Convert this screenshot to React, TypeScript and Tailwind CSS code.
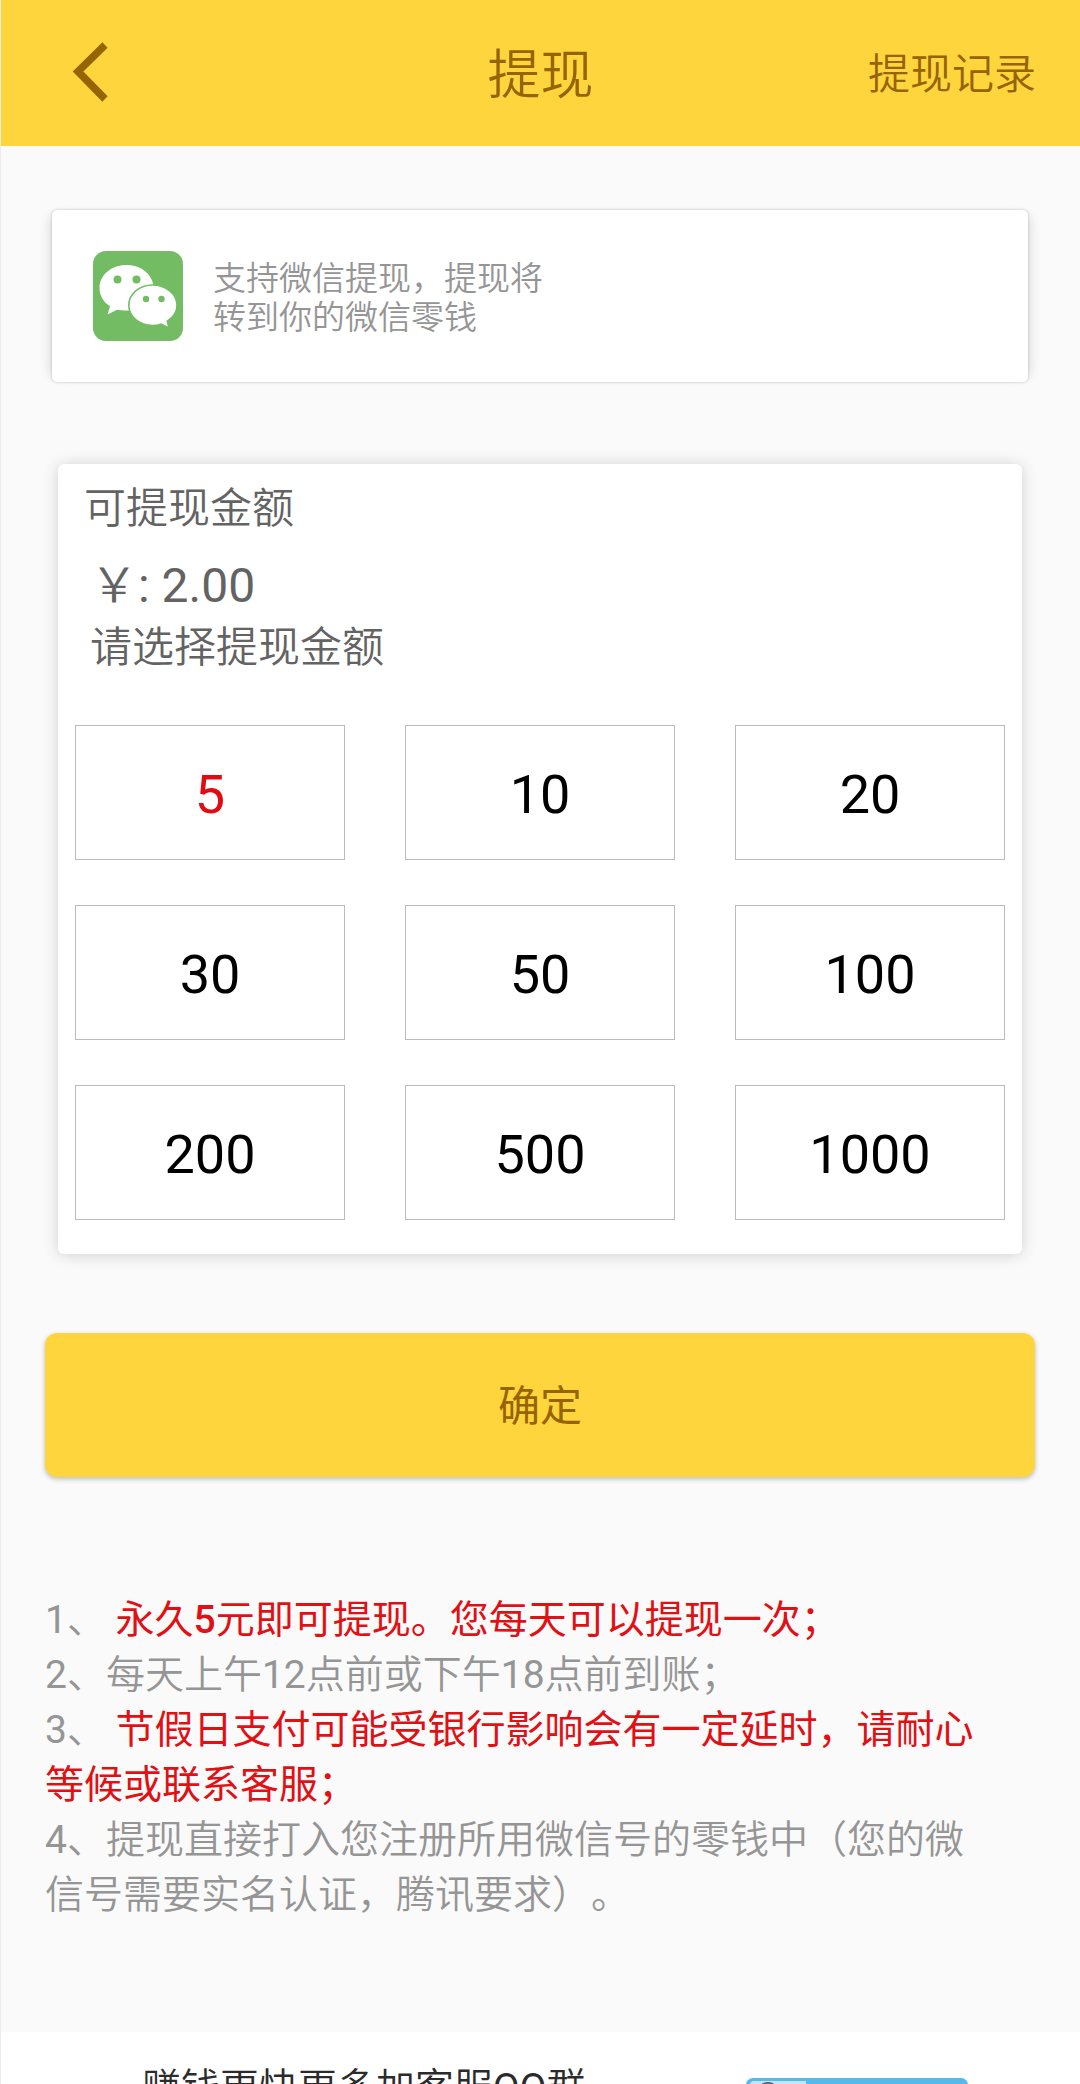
const amounts = [5, 10, 20, 30, 50, 100, 200, 500, 1000];

function WeChatLogo() {
  return (
    <svg viewBox="0 0 90 90" className="h-[90px] w-[90px] shrink-0">
      <rect width="90" height="90" rx="13" fill="#74bc63" />
      <path
        d="M33.500 14C18.300 14 6.500 24 6.500 37C6.500 44.500 10.300 51 17 55.200L14.500 63.500L24 58.800C27 59.300 30 59.600 33.500 59.600C48.700 59.600 60.500 50 60.500 37C60.500 24 48.700 14 33.500 14Z"
        fill="#fff"
      />
      <circle cx="24.500" cy="28.500" r="4" fill="#74bc63" />
      <circle cx="43.500" cy="28.500" r="4" fill="#74bc63" />
      <path
        d="M59.500 34C46.300 34 35.800 43 35.800 54.300C35.800 65.500 46.300 74.500 59.500 74.500C62.500 74.500 65.500 74 68 73.200L76 77L74.300 70.200C80 66.500 84 61 84 54.300C84 43 72.700 34 59.500 34Z"
        fill="#fff"
        stroke="#74bc63"
        strokeWidth="1.600"
      />
      <circle cx="53" cy="48" r="3.200" fill="#74bc63" />
      <circle cx="68.500" cy="48" r="3.200" fill="#74bc63" />
    </svg>
  );
}

export default function App() {
  return (
    <div className="flex h-[2084px] w-[1080px] flex-col overflow-hidden border-l border-[#ececec] bg-[#fafafa] font-['Roboto','Noto_Sans_CJK_SC_DemiLight','Noto_Sans_CJK_SC',sans-serif] font-normal [text-spacing-trim:space-all]">
      <header className="grid h-[146px] shrink-0 grid-cols-3 items-center bg-[#ffd53e] text-[#966403]">
        <svg viewBox="0 0 36 60" className="mb-[3px] ml-[71px] h-[60px] w-9" fill="none" stroke="#966403" strokeWidth="7.500">
          <path d="M33 3L6 29.500L33 57" />
        </svg>
        <h1 className="pt-[5px] text-center text-[53px] leading-[60px]">提现</h1>
        <span className="pt-1 pr-11 text-right text-[42px] leading-[60px]">提现记录</span>
      </header>

      <section className="mt-16 ml-[51px] flex h-[172px] w-[976px] shrink-0 items-center rounded-[5px] bg-white pl-[41px] shadow-[0_0_3px_rgba(0,0,0,0.22),8px_0_10px_-6px_rgba(0,0,0,0.12),-8px_0_10px_-6px_rgba(0,0,0,0.12)]">
        <WeChatLogo />
        <p className="ml-[30px] pt-[3px] text-[33px] leading-[39px] text-[#959595]">
          支持微信提现，提现将
          <br />
          转到你的微信零钱
        </p>
      </section>

      <section className="mt-[82px] ml-[57px] flex h-[790px] w-[964px] shrink-0 flex-col rounded-[6px] bg-white text-[#636363] shadow-[0_1px_16px_rgba(0,0,0,0.17)]">
        <h2 className="mt-[15px] ml-[26px] text-[42px] leading-[60px]">可提现金额</h2>
        <p className="mt-[17px] ml-8 text-[48px] leading-[60px]">￥: 2.00</p>
        <p className="mt-[2px] ml-8 text-[42px] leading-[60px]">请选择提现金额</p>
        <div className="mt-[47px] ml-[17px] grid w-[930px] grid-cols-3 gap-x-[60px] gap-y-[45px]">
          {amounts.map((amount) => (
            <button
              key={amount}
              className={`h-[135px] border border-[#bbb] pt-[5px] text-[54px] leading-none ${amount === 5 ? "text-[#e10b12]" : "text-black"}`}
            >
              {amount}
            </button>
          ))}
        </div>
      </section>

      <button className="mt-[79px] ml-11 h-[144px] w-[990px] shrink-0 rounded-[12px] bg-[#ffd53e] pt-[3px] font-['Roboto','Noto_Sans_CJK_SC',sans-serif] text-[42px] text-[#966403] shadow-[0_2px_5px_rgba(0,0,0,0.25)]">
        确定
      </button>

      <div className="mt-[116px] ml-11 h-[330px] shrink-0 text-[39px] leading-[55px] whitespace-nowrap text-[#959595]">
        <p>1、 <span className="font-['Roboto','Noto_Sans_CJK_SC',sans-serif] text-[#e01015]">永久<span className="font-medium">5</span>元即可提现。您每天可以提现一次；</span></p>
        <p>2、每天上午12点前或下午18点前到账；</p>
        <p>
          3、 <span className="font-['Roboto','Noto_Sans_CJK_SC',sans-serif] text-[#e01015]">节假日支付可能受银行影响会有一定延时，请耐心<br />等候或联系客服；</span>
        </p>
        <p>4、提现直接打入您注册所用微信号的零钱中（您的微<br />信号需要实名认证，腾讯要求）。</p>
      </div>

      <footer className="mt-[109px] flex h-[52px] shrink-0 items-start overflow-hidden bg-white pl-[141px]">
        <p className="mt-[29px] w-[604px] text-[39px] leading-[55px] text-[#2b2b2b]">赚钱更快更多加客服QQ群</p>
        <div className="mt-[46px] h-20 w-[222px] overflow-hidden rounded-[7px] bg-[#57b9ea] pt-[3px] pl-1">
          <div className="h-20 w-14 rounded-tl-[4px] bg-[#c5e5f5] pt-px pl-[9px]">
            <div className="h-4 w-[18px] rounded-full bg-[#5e6a73]" />
          </div>
        </div>
      </footer>
    </div>
  );
}
